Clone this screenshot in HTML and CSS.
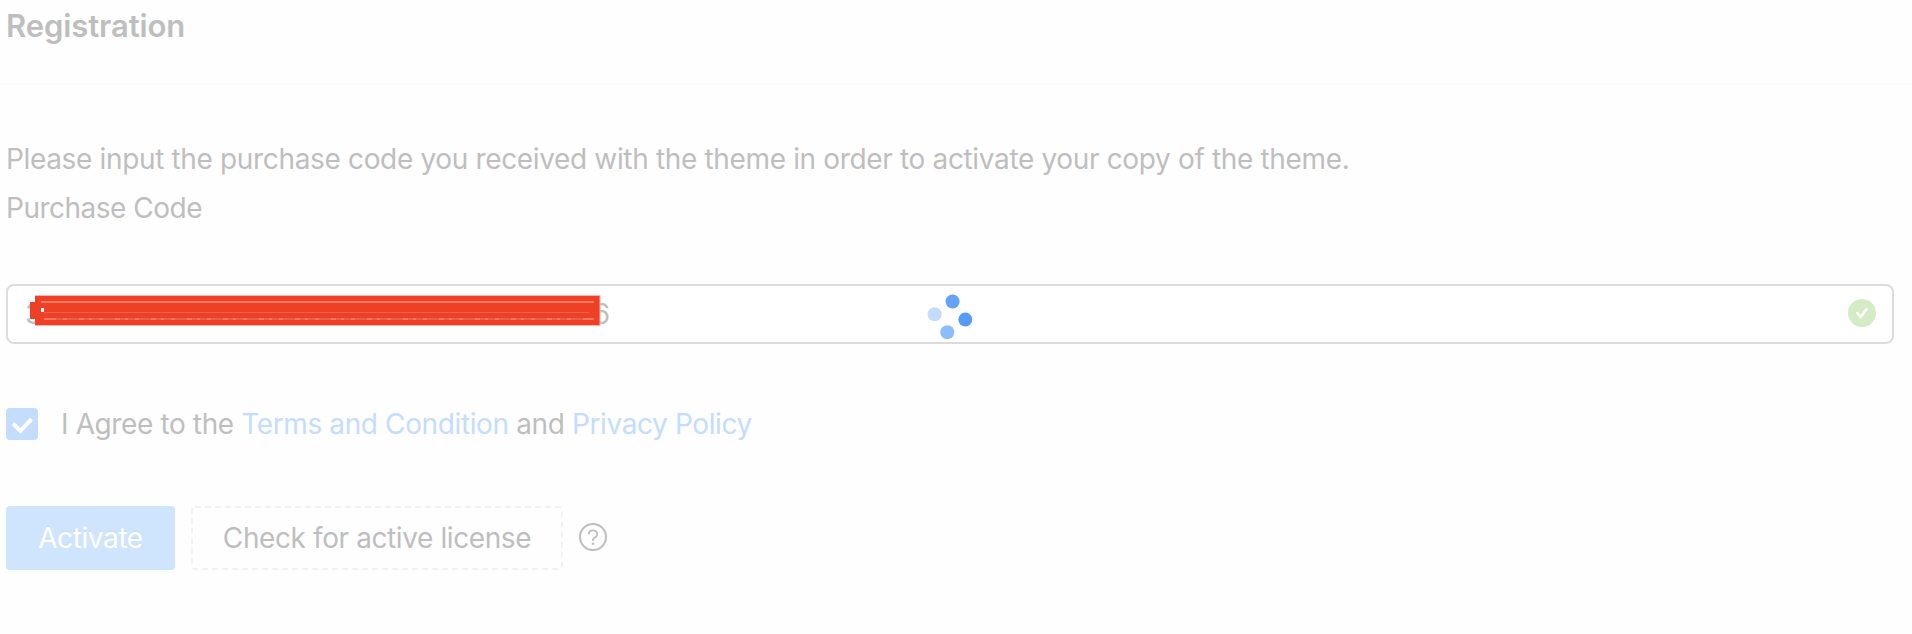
FILE: index.html
```html
<!DOCTYPE html>
<html lang="en">
<head>
<meta charset="utf-8">
<title>Registration</title>
<link rel="stylesheet" href="styles.css">
</head>
<body>
<main class="card">
  <header class="card-head"><h1 class="title">Registration</h1></header>
  <form class="card-body">
    <p class="line"><span class="intro">Please input the purchase code you received with the theme in order to activate your copy of the theme.</span></p>
    <label class="line"><span class="label">Purchase Code</span></label>
    <div class="field">
      <span class="code"><span>3</span><span>6</span></span>
      <svg class="redaction" width="572" height="31" viewBox="0 0 572 31">
        <path fill="#f8b5a8" d="M5 0h565.500v31H5z"/>
        <path fill="#ee4027" d="M5 1h564.500v29H5zM0 7h6v17H0z"/>
        <path stroke="#f48a77" stroke-width="1.7" d="M11 7h553M14 24h550"/>
        <path stroke="#e6624e" d="M14 17.5h545"/>
        <path stroke="#dc5c48" stroke-width="1.6" stroke-dasharray="7 4 12 5 5 3" d="M26 24h530"/>
        <path fill="#fff" d="M11 13h3v4h-3z"/>
      </svg>
      <svg class="valid" width="28" height="28" viewBox="0 0 28 28">
        <circle cx="14" cy="14" r="14" fill="#d3ecc5"/>
        <path d="M9.200 14l3.400 4 6-8" fill="none" stroke="#fff" stroke-width="2.5" stroke-linecap="round" stroke-linejoin="round"/>
      </svg>
      <svg class="spinner" width="46" height="46" viewBox="0 0 46 46">
        <circle cx="25.6" cy="7.5" r="7" fill="#62a3f8"/>
        <circle cx="38.3" cy="25.6" r="7" fill="#559bf7"/>
        <circle cx="20.3" cy="38.3" r="7" fill="#8dbcfa"/>
        <circle cx="7.6" cy="20.3" r="7" fill="#c3dbfd"/>
      </svg>
    </div>
    <div class="agree">
      <svg class="check" width="32" height="32" viewBox="0 0 32 32">
        <rect width="32" height="32" rx="4" fill="#c4dcfd"/>
        <path d="M7 15.6l7.4 7.2L25.500 11.200" fill="none" stroke="#fff" stroke-width="4"/>
      </svg>
      <span class="agree-text">I Agree to the <a class="link">Terms and Condition</a> and <a class="link">Privacy Policy</a></span>
    </div>
    <div class="actions">
      <button type="button" class="btn primary"><span>Activate</span></button>
      <button type="button" class="btn dashed">
        <svg class="outline" width="372" height="64"><rect x="1" y="1" width="370" height="62" rx="3" fill="none" stroke="#f1f1f1" stroke-width="2" stroke-dasharray="6 4"/></svg>
        <span>Check for active license</span>
      </button>
      <svg class="help" width="28" height="28" viewBox="0 0 28 28" fill="none" stroke="#bebebe">
        <circle cx="14" cy="14" r="13" stroke-width="2"/>
        <path d="M9.800 11.400c0-2.500 1.800-4 4.200-4s4.200 1.600 4.200 3.800c0 1.900-1.200 2.800-2.600 3.400-1.100.5-1.600 1.100-1.600 2.300v1" stroke-width="1.800"/>
        <circle cx="14" cy="20.800" r="1.300" fill="#bebebe" stroke="none"/>
      </svg>
    </div>
  </form>
</main>
</body>
</html>
```
FILE: styles.css
```css
* { box-sizing: border-box; }
body { margin: 0; background: #fefefe; color: #bebebe; font: 28px/49px Inter, "Liberation Sans", sans-serif; }
.card { height: 634px; overflow: hidden; }
.card-head { height: 85px; padding: 0 6px; border-bottom: 2px solid #fafafa; }
.title { margin: 0; font-size: 31px; line-height: 51px; font-weight: 600; letter-spacing: -0.1px; }
.card-body { padding: 50px 18px 0 6px; }
.line { display: block; height: 49px; margin: 0; white-space: nowrap; }
.intro { letter-spacing: -0.345px; }
.label { letter-spacing: -0.5px; }
.field { position: relative; display: flex; align-items: center; justify-content: space-between; height: 60px; margin-top: 51px; padding: 0 16px 0 17px; border: 2px solid #dcdcdc; border-radius: 8px; background: #fff; }
.code { display: flex; justify-content: space-between; width: 585px; }
.valid { margin-bottom: 2px; }
.redaction { position: absolute; left: 22px; top: 9px; }
.spinner { position: absolute; left: 919px; top: 8px; }
.agree { display: flex; align-items: center; gap: 23px; height: 32px; margin-top: 64px; white-space: nowrap; }
.agree-text { letter-spacing: -0.38px; }
.link { color: #c4dcfd; }
.actions { display: flex; align-items: center; gap: 16px; margin-top: 66px; }
.btn { position: relative; display: flex; align-items: center; justify-content: center; height: 64px; padding: 0; border: 0; border-radius: 4px; font: inherit; letter-spacing: -0.4px; white-space: nowrap; }
.primary { width: 169px; background: #cfe5fe; color: #fff; box-shadow: 0 4px 0 #fbfcfc; text-shadow: 0 -2px 0 rgba(0, 0, 0, .03); }
.dashed { width: 372px; background: #fefefe; color: #bebebe; }
.outline { position: absolute; left: 0; top: 0; }
.help { margin-bottom: 2px; }
```
